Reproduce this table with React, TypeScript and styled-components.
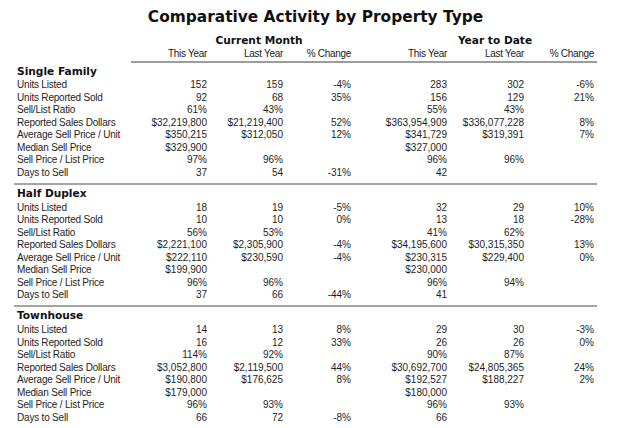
import React from "react";
import styled, { createGlobalStyle } from "styled-components";

const GlobalStyle = createGlobalStyle`
  html, body { margin: 0; padding: 0; background: #ffffff; }
  body { font-family: "Liberation Sans", Arial, sans-serif; color: #1a1a1a; }
`;

const COLS = "117px 76px 76px 68px 96px 77px 70px 3px";

const Page = styled.div`
  width: 640px;
  height: 428px;
  overflow: hidden;
  box-sizing: border-box;
  padding-left: 14px;
`;

const Title = styled.h1`
  margin: 0;
  width: 603px;
  padding-top: 7px;
  box-sizing: border-box;
  height: 33.5px;
  text-align: center;
  font-family: "DejaVu Sans", Verdana, sans-serif;
  font-weight: bold;
  font-size: 15.4px;
  line-height: 20px;
  color: #111;
`;

const Grid = styled.div`
  display: grid;
  grid-template-columns: ${COLS};
  width: 583px;
`;

const GroupRow = styled(Grid)`
  height: 13px;
  line-height: 13px;
`;

const GroupTitle = styled.div<{ $span: string; $shift: number }>`
  grid-column: ${(p) => p.$span};
  padding-left: ${(p) => p.$shift}px;
  text-align: center;
  font-family: "DejaVu Sans", Verdana, sans-serif;
  font-weight: bold;
  font-size: 10.6px;
  color: #111;
`;

const HeadRow = styled(Grid)`
  line-height: 13px;
  font-size: 10px;
  letter-spacing: -0.3px;
`;

const HeadCell = styled.div<{ $col: number }>`
  grid-column: ${(p) => p.$col};
  text-align: right;
  height: 13px;
  white-space: nowrap;
  color: #222;
`;

const HeadRule = styled.div`
  grid-column: 2 / -1;
  margin-top: 1.2px;
  height: 2px;
  background: #9c9c9c;
`;

const Section = styled.section`
  width: 583px;
  padding-top: 1px;
  padding-bottom: 3.55px;
  border-bottom: 2px solid #a4a4a4;
`;

const SectionTitle = styled.div`
  height: 14px;
  line-height: 14px;
  margin-bottom: 1.75px;
  padding-left: 3px;
  font-family: "DejaVu Sans", Verdana, sans-serif;
  font-weight: bold;
  font-size: 10.6px;
  color: #111;
`;

const Row = styled(Grid)`
  height: 12.5px;
  line-height: 12.5px;
`;

const Label = styled.div`
  padding-left: 3px;
  font-size: 10px;
  letter-spacing: -0.2px;
  white-space: nowrap;
  color: #1e1e1e;
`;

const Num = styled.div`
  text-align: right;
  font-size: 10px;
  white-space: nowrap;
  color: #1e1e1e;
`;

const LABELS = [
  "Units Listed",
  "Units Reported Sold",
  "Sell/List Ratio",
  "Reported Sales Dollars",
  "Average Sell Price / Unit",
  "Median Sell Price",
  "Sell Price / List Price",
  "Days to Sell",
];

const sections: { name: string; rows: string[][] }[] = [
  {
    name: "Single Family",
    rows: [
      ["152", "159", "-4%", "283", "302", "-6%"],
      ["92", "68", "35%", "156", "129", "21%"],
      ["61%", "43%", "", "55%", "43%", ""],
      ["$32,219,800", "$21,219,400", "52%", "$363,954,909", "$336,077,228", "8%"],
      ["$350,215", "$312,050", "12%", "$341,729", "$319,391", "7%"],
      ["$329,900", "", "", "$327,000", "", ""],
      ["97%", "96%", "", "96%", "96%", ""],
      ["37", "54", "-31%", "42", "", ""],
    ],
  },
  {
    name: "Half Duplex",
    rows: [
      ["18", "19", "-5%", "32", "29", "10%"],
      ["10", "10", "0%", "13", "18", "-28%"],
      ["56%", "53%", "", "41%", "62%", ""],
      ["$2,221,100", "$2,305,900", "-4%", "$34,195,600", "$30,315,350", "13%"],
      ["$222,110", "$230,590", "-4%", "$230,315", "$229,400", "0%"],
      ["$199,900", "", "", "$230,000", "", ""],
      ["96%", "96%", "", "96%", "94%", ""],
      ["37", "66", "-44%", "41", "", ""],
    ],
  },
  {
    name: "Townhouse",
    rows: [
      ["14", "13", "8%", "29", "30", "-3%"],
      ["16", "12", "33%", "26", "26", "0%"],
      ["114%", "92%", "", "90%", "87%", ""],
      ["$3,052,800", "$2,119,500", "44%", "$30,692,700", "$24,805,365", "24%"],
      ["$190,800", "$176,625", "8%", "$192,527", "$188,227", "2%"],
      ["$179,000", "", "", "$180,000", "", ""],
      ["96%", "93%", "", "96%", "93%", ""],
      ["66", "72", "-8%", "66", "", ""],
    ],
  },
];

const HEADS = ["This Year", "Last Year", "% Change", "This Year", "Last Year", "% Change"];

export default function App() {
  return (
    <>
      <GlobalStyle />
      <Page>
        <Title>Comparative Activity by Property Type</Title>
        <GroupRow>
          <GroupTitle $span="2 / 5" $shift={36}>Current Month</GroupTitle>
          <GroupTitle $span="5 / 9" $shift={42}>Year to Date</GroupTitle>
        </GroupRow>
        <HeadRow>
          {HEADS.map((h, i) => (
            <HeadCell key={i} $col={i + 2}>{h}</HeadCell>
          ))}
          <HeadRule />
        </HeadRow>
        {sections.map((s) => (
          <Section key={s.name}>
            <SectionTitle>{s.name}</SectionTitle>
            {s.rows.map((r, i) => (
              <Row key={i}>
                <Label>{LABELS[i]}</Label>
                {r.map((v, j) => (
                  <Num key={j}>{v}</Num>
                ))}
                <Num />
              </Row>
            ))}
          </Section>
        ))}
      </Page>
    </>
  );
}
